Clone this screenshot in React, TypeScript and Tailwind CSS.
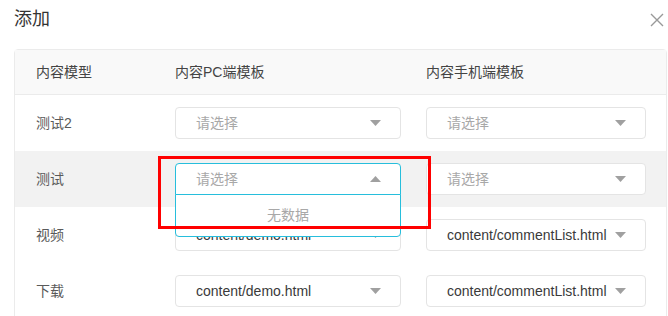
import React from 'react';

interface Row {
  name: string;
  pc: string | null;
  mobile: string | null;
  active?: boolean;
  open?: boolean;
}

const rows: Row[] = [
  { name: '测试2', pc: null, mobile: null },
  { name: '测试', pc: null, mobile: null, active: true, open: true },
  { name: '视频', pc: 'content/demo.html', mobile: 'content/commentList.html' },
  { name: '下载', pc: 'content/demo.html', mobile: 'content/commentList.html' },
];

const Caret: React.FC<{ up?: boolean }> = ({ up }) => (
  <svg width="11" height="6" viewBox="0 0 11 6" className="shrink-0">
    {up ? <path d="M0 6 L5.5 0 L11 6 Z" fill="#a0a0a0" /> : <path d="M0 0 L11 0 L5.5 6 Z" fill="#a0a0a0" />}
  </svg>
);

const Select: React.FC<{ value: string | null; width: string; open?: boolean }> = ({ value, width, open }) => (
  <div className={`relative ${width}`}>
    <div
      className={`h-[32px] flex items-center justify-between pl-[20px] pr-[19px] rounded-[4px] border bg-white ${
        open ? 'border-[#27bedc] rounded-b-none' : 'border-[#e4e4e4]'
      }`}
    >
      <span className={value ? 'text-[#3a3a3a]' : 'text-[#a8a8a8]'}>{value ?? '请选择'}</span>
      <Caret up={open} />
    </div>
    {open && (
      <div className="absolute left-0 right-0 top-[31px] z-10 h-[43px] bg-white border border-[#27bedc] rounded-b-[4px] flex items-center justify-center text-[#a8a8a8]">
        无数据
      </div>
    )}
  </div>
);

export default function App() {
  return (
    <div className="w-[668px] h-[316px] overflow-hidden bg-white relative text-[14px] font-['Liberation_Sans','Noto_Sans_CJK_SC',sans-serif]">
      <div className="flex items-center justify-between pl-[14px] pr-[4px] h-[40px]">
        <span className="text-[18px] text-[#333] mt-[-2px]">添加</span>
        <svg width="14" height="14" viewBox="0 0 14 14">
          <path d="M1 1 L13 13 M13 1 L1 13" stroke="#999" strokeWidth="1.4" />
        </svg>
      </div>
      <div className="ml-[14px] mt-[9px] w-[653px] border border-[#ebebeb] rounded-t-[4px]">
        <div className="grid grid-cols-[146px_250px_1fr] h-[45px] items-center bg-[#f9f9f9] border-b border-[#ebebeb] text-[#444]">
          <div className="pl-[21px]">内容模型</div>
          <div className="pl-[14px]">内容PC端模板</div>
          <div className="pl-[15px]">内容手机端模板</div>
        </div>
        {rows.map((r) => (
          <div
            key={r.name}
            className={`grid grid-cols-[146px_250px_1fr] h-[56px] items-center ${r.active ? 'bg-[#f2f2f2]' : 'bg-white'}`}
          >
            <div className="pl-[21px] text-[#5a5a5a]">{r.name}</div>
            <div className="pl-[14px]">
              <Select value={r.pc} width="w-[226px]" open={r.open} />
            </div>
            <div className="pl-[15px]">
              <Select value={r.mobile} width="w-[220px]" />
            </div>
          </div>
        ))}
      </div>
      <div className="absolute left-[158px] top-[156px] w-[273px] h-[73px] border-[3px] border-[#ff0000] z-20 pointer-events-none" />
    </div>
  );
}
